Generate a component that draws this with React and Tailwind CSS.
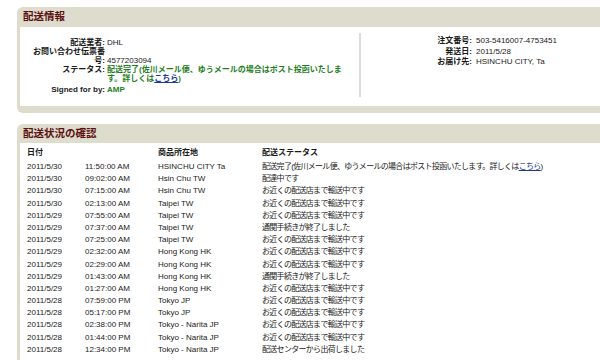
const rows = [
  ["2011/5/30", "11:50:00 AM", "HSINCHU CITY Ta", "link"],
  ["2011/5/30", "09:02:00 AM", "Hsin Chu TW", "配達中です"],
  ["2011/5/30", "07:15:00 AM", "Hsin Chu TW", "お近くの配送店まで輸送中です"],
  ["2011/5/30", "02:13:00 AM", "Taipei TW", "お近くの配送店まで輸送中です"],
  ["2011/5/29", "07:55:00 AM", "Taipei TW", "お近くの配送店まで輸送中です"],
  ["2011/5/29", "07:37:00 AM", "Taipei TW", "通関手続きが終了しました"],
  ["2011/5/29", "07:25:00 AM", "Taipei TW", "お近くの配送店まで輸送中です"],
  ["2011/5/29", "02:32:00 AM", "Hong Kong HK", "お近くの配送店まで輸送中です"],
  ["2011/5/29", "02:29:00 AM", "Hong Kong HK", "お近くの配送店まで輸送中です"],
  ["2011/5/29", "01:43:00 AM", "Hong Kong HK", "通関手続きが終了しました"],
  ["2011/5/29", "01:27:00 AM", "Hong Kong HK", "お近くの配送店まで輸送中です"],
  ["2011/5/28", "07:59:00 PM", "Tokyo JP", "お近くの配送店まで輸送中です"],
  ["2011/5/28", "05:17:00 PM", "Tokyo JP", "お近くの配送店まで輸送中です"],
  ["2011/5/28", "02:38:00 PM", "Tokyo - Narita JP", "お近くの配送店まで輸送中です"],
  ["2011/5/28", "01:44:00 PM", "Tokyo - Narita JP", "お近くの配送店まで輸送中です"],
  ["2011/5/28", "12:34:00 PM", "Tokyo - Narita JP", "配送センターから出荷しました"],
];

function Label({ children, className = "" }) {
  return <div className={`text-right font-bold text-[#1a1a1a] pr-[1px] ${className}`}>{children}</div>;
}

const App = () => {
  return (
    <div className="w-[600px] h-[360px] overflow-hidden bg-white pt-[7px] pl-[17px] text-[8px] text-[#1a1a1a] font-['Liberation_Sans','Noto_Sans_CJK_JP',sans-serif]">
      {/* 配送情報 */}
      <div className="bg-[#dddccd] rounded-l-[6px] pb-[7px]">
        <div className="h-[20px] pl-[6px] flex items-center text-[10.5px] font-bold text-[#5c1010]">
          配送情報
        </div>
        <div className="ml-[3px] bg-white h-[79px] flex">
          <div className="w-[339px] pt-[10.5px] grid grid-cols-[86px_245px] leading-[9px] content-start">
            <Label className="pl-[7px]">配送業者:</Label>
            <div className="pl-[1px]">DHL</div>
            <Label className="pl-[7px]">お問い合わせ伝票番号:</Label>
            <div className="pl-[1px] self-end">4577203094</div>
            <Label className="pl-[7px]">ステータス:</Label>
            <div className="pl-[1px] text-[#1f7f1f] font-bold">
              配送完了(佐川メール便、ゆうメールの場合はポスト投函いたします。詳しくは
              <span className="inline-block leading-[9px] text-[#1a3a9a] underline">こちら</span>)
            </div>
            <Label className="pl-[7px] mt-[2px]">Signed for by:</Label>
            <div className="pl-[1px] mt-[2px] text-[#1f7f1f] font-bold">AMP</div>
          </div>
          <div className="self-start mt-[6px] h-[64px] border-l-2 border-[#dcdcdc]" />
          <div className="pt-[9px] grid grid-cols-[112px_auto] leading-[10.5px] content-start">
            <Label>注文番号:</Label>
            <div className="pl-[3px]">503-5416007-4753451</div>
            <Label>発送日:</Label>
            <div className="pl-[3px]">2011/5/28</div>
            <Label>お届け先:</Label>
            <div className="pl-[3px]">HSINCHU CITY, Ta</div>
          </div>
        </div>
      </div>

      {/* 配送状況の確認 */}
      <div className="mt-[11px] bg-[#dddccd] rounded-tl-[6px] h-[300px]">
        <div className="h-[19px] pl-[6px] flex items-center text-[10.5px] font-bold text-[#5c1010]">
          配送状況の確認
        </div>
        <div className="ml-[3px] bg-white h-full pl-[7px] pt-[4px]">
          <div className="grid grid-cols-[58px_73px_104px_1fr] h-[12px] leading-[12px] mb-[2px] font-bold">
            <div>日付</div>
            <div />
            <div>商品所在地</div>
            <div>配送ステータス</div>
          </div>
          {rows.map((r, i) => (
            <div key={i} className="grid grid-cols-[58px_73px_104px_1fr] h-[12.2px] leading-[12.2px] whitespace-nowrap">
              <div>{r[0]}</div>
              <div>{r[1]}</div>
              <div>{r[2]}</div>
              <div className="tracking-[-0.7px]">
                {r[3] === "link" ? (
                  <>
                    配送完了(佐川メール便、ゆうメールの場合はポスト投函いたします。詳しくは
                    <span className="text-[#1a3a9a] underline">こちら</span>)
                  </>
                ) : (
                  r[3]
                )}
              </div>
            </div>
          ))}
        </div>
      </div>
    </div>
  );
};

export default App;
